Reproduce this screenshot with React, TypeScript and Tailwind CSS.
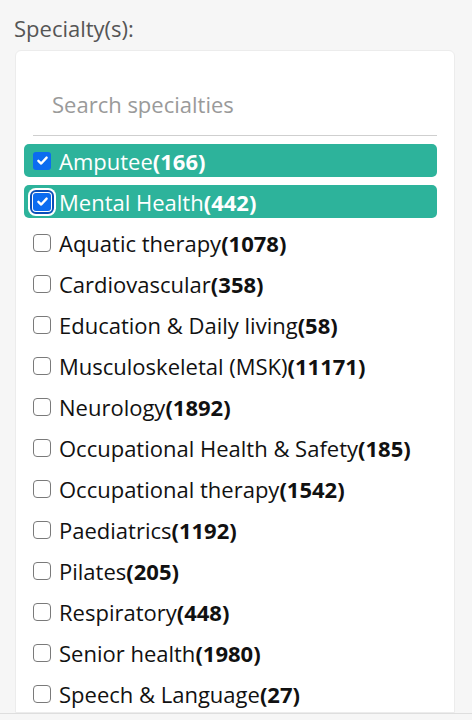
import React from "react";

type Specialty = { name: string; count: number; checked?: boolean; focused?: boolean };

const specialties: Specialty[] = [
  { name: "Amputee", count: 166, checked: true },
  { name: "Mental Health", count: 442, checked: true, focused: true },
  { name: "Aquatic therapy", count: 1078 },
  { name: "Cardiovascular", count: 358 },
  { name: "Education & Daily living", count: 58 },
  { name: "Musculoskeletal (MSK)", count: 11171 },
  { name: "Neurology", count: 1892 },
  { name: "Occupational Health & Safety", count: 185 },
  { name: "Occupational therapy", count: 1542 },
  { name: "Paediatrics", count: 1192 },
  { name: "Pilates", count: 205 },
  { name: "Respiratory", count: 448 },
  { name: "Senior health", count: 1980 },
  { name: "Speech & Language", count: 27 },
];

const Box = ({ checked, focused }: { checked?: boolean; focused?: boolean }) => {
  if (checked) {
    return (
      <span
        className={
          "flex h-[18px] w-[18px] shrink-0 items-center justify-center rounded-[3px] bg-[#0b6cf0] " +
          (focused ? "outline-2 outline-[#0a4fb8] outline-offset-1 ring-[5px] ring-white" : "")
        }
      >
        <svg width="13" height="13" viewBox="0 0 12 12" fill="none">
          <path d="M2.2 6.3 4.8 8.8 9.8 3.3" stroke="white" strokeWidth="2.2" strokeLinecap="round" strokeLinejoin="round" />
        </svg>
      </span>
    );
  }
  return <span className="h-[18px] w-[18px] shrink-0 rounded-[4px] border border-[#7a7a7a] bg-white" />;
};

export default function App() {
  return (
    <div className="flex h-[720px] flex-col overflow-hidden bg-[#f6f6f6] font-['Open_Sans',sans-serif]">
      <div className="px-[14px] pt-[13px] pb-[7px] text-[22px] leading-[30px] text-[#555]">Specialty(s):</div>
      <div className="ml-[15px] w-[440px] flex-1 overflow-hidden rounded-t-md border border-[#ececec] bg-white">
        <div className="mx-[17px] mt-[32px] border-b border-[#cfcfcf] pb-[10px] pl-[19px] text-[22px] leading-[42px] text-[#9a9a9a]">
          Search specialties
        </div>
        <div className="mt-[8px] flex flex-col gap-[8px] pl-[8px] pr-[17px]">
          {specialties.map((s) => (
            <div
              key={s.name}
              className={
                "flex h-[33px] items-center gap-[8px] rounded-[5px] pl-[9px] text-[22px] leading-[30px] " +
                (s.checked ? "bg-[#2db39b] text-white" : "text-[#111]")
              }
            >
              <Box checked={s.checked} focused={s.focused} />
              <span className="whitespace-nowrap">
                {s.name}
                <b className="font-bold">({s.count})</b>
              </span>
            </div>
          ))}
        </div>
      </div>
      <div className="h-[7px] shrink-0 border-t border-[#dedede] bg-[#f6f6f6]" />
    </div>
  );
}
